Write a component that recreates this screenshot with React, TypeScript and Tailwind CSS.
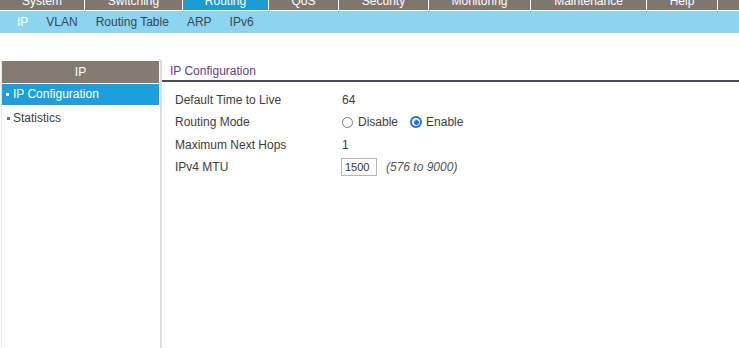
import React from "react";

const tabs: { label: string; cls: string; active?: boolean }[] = [
  { label: "System", cls: "w-[85px]" },
  { label: "Switching", cls: "w-[98px]" },
  { label: "Routing", cls: "w-[86px]", active: true },
  { label: "QoS", cls: "w-[70px]" },
  { label: "Security", cls: "w-[90px]" },
  { label: "Monitoring", cls: "w-[102px]" },
  { label: "Maintenance", cls: "w-[116px]" },
  { label: "Help", cls: "w-[71px]" },
];

const subs = ["IP", "VLAN", "Routing Table", "ARP", "IPv6"];

function Row({ label, children }: { label: string; children: React.ReactNode }) {
  return (
    <div className="flex h-[22px] items-center">
      <div className="w-[167px] text-[12px] text-[#3d3d3d]">{label}</div>
      <div className="flex items-center text-[12px] text-[#3d3d3d]">{children}</div>
    </div>
  );
}

export default function App() {
  return (
    <div className="flex h-[348px] w-[739px] flex-col overflow-hidden bg-white font-['Liberation_Sans',Arial,sans-serif]">
      {/* top nav (scrolled, clipped) */}
      <div className="flex h-[11px] shrink-0 overflow-hidden border-b border-white bg-[#7f766e]">
        {tabs.map((t) => (
          <div
            key={t.label}
            className={`${t.cls} flex h-[10px] shrink-0 justify-center border-r border-white ${
              t.active ? "bg-[#1d9ad6]" : ""
            }`}
          >
            <span className="-mt-[5px] text-[12px] leading-[12px] text-white">{t.label}</span>
          </div>
        ))}
        <div className="flex-1" />
      </div>
      {/* sub nav */}
      <div className="flex h-[22px] shrink-0 items-center gap-[18px] bg-[#8bd5f1] pl-[17px] text-[12px]">
        {subs.map((s, i) => (
          <span key={s} className={i === 0 ? "text-white" : "text-[#3a4650]"}>
            {s}
          </span>
        ))}
      </div>
      {/* main */}
      <div className="mt-[27px] flex flex-1">
        {/* left panel */}
        <div className="ml-[1px] w-[161px] shrink-0 border-l border-r-2 border-l-[#e6e6e6] border-r-[#dcdcdc] pt-[1px]">
          <div className="mr-[1px] flex h-[22px] items-center justify-center bg-[#857b72] text-[12px] text-white">
            IP
          </div>
          <div className="mt-[1px] mr-[1px] flex h-[21px] items-center bg-[#1c9fdc] pl-[4px] pb-[1px] text-[12px] text-white">
            <span className="mr-[4px] inline-block h-[3px] w-[3px] bg-white" />
            IP Configuration
          </div>
          <div className="mt-[2px] flex h-[22px] items-center pl-[5px] text-[12px] text-[#3d3d3d]">
            <span className="mr-[3px] inline-block h-[3px] w-[3px] bg-[#777]" />
            Statistics
          </div>
        </div>
        {/* right content */}
        <div className="flex flex-1 flex-col">
          <div className="flex h-[22px] shrink-0 items-center border-b-2 border-[#4f4858] pl-[8px] pt-[1px] text-[12px] text-[#643c88]">
            IP Configuration
          </div>
          <div className="ml-[2px] flex-1 border-l border-[#f3f3f3] pl-[10px] pt-[7px]">
            <Row label="Default Time to Live">64</Row>
            <Row label="Routing Mode">
              <span className="mr-[5px] inline-block h-[11px] w-[11px] rounded-full border border-[#777]" />
              <span>Disable</span>
              <span className="ml-[12px] mr-[4px] flex h-[12px] w-[12px] items-center justify-center rounded-full border-2 border-[#1a73e8] bg-white">
                <span className="h-[5px] w-[5px] rounded-full bg-[#1a73e8]" />
              </span>
              <span>Enable</span>
            </Row>
            <div className="pt-[1px]">
              <Row label="Maximum Next Hops">1</Row>
            </div>
            <Row label="IPv4 MTU">
              <span className="-ml-[1px] flex h-[18px] w-[36px] items-center border border-[#b5b5b5] pl-[3px] text-[11px] text-[#333]">
                1500
              </span>
              <span className="ml-[9px] text-[12px] italic text-[#555]">(576 to 9000)</span>
            </Row>
          </div>
        </div>
      </div>
    </div>
  );
}
